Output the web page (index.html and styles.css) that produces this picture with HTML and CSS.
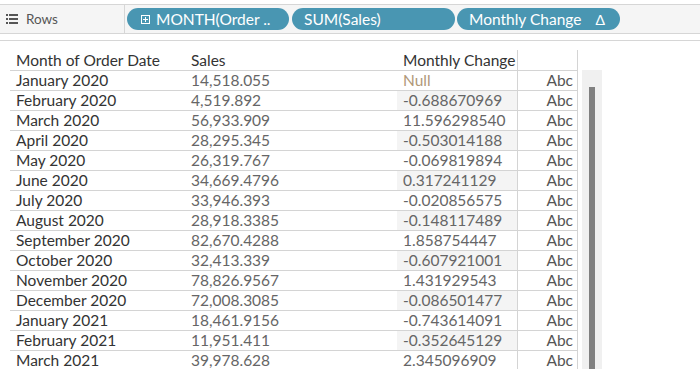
FILE: index.html
```html
<!DOCTYPE html>
<html lang="en">
<head>
    <meta charset="UTF-8">
    <meta name="viewport" content="width=device-width, initial-scale=1.0">
    <title>Monthly Change - Rows</title>
    <link rel="stylesheet" href="styles.css">
</head>
<body>
    <div class="shelf">
        <div class="shelf-label">
            <svg class="rows-icon" width="12" height="10" viewBox="0 0 12 10">
                <rect x="0" y="0" width="2" height="2" fill="#555"/>
                <rect x="3" y="0" width="9" height="2" fill="#555"/>
                <rect x="0" y="4" width="2" height="2" fill="#555"/>
                <rect x="3" y="4" width="9" height="2" fill="#555"/>
                <rect x="0" y="8" width="2" height="2" fill="#555"/>
                <rect x="3" y="8" width="9" height="2" fill="#555"/>
            </svg>
            <span>Rows</span>
        </div>
        <div class="pills">
            <div class="pill pill-date"><span class="plus-box"></span>MONTH(Order ..</div>
            <div class="pill pill-sum">SUM(Sales)</div>
            <div class="pill pill-calc">Monthly Change <span class="delta">&Delta;</span></div>
        </div>
    </div>

    <div class="divider"></div>

    <div class="view">
        <div class="table">
            <div class="row head">
                <div class="cell c1">Month of Order Date</div>
                <div class="cell c2">Sales</div>
                <div class="cell c3">Monthly Change</div>
                <div class="cell c4"></div>
            </div>
            <div class="row">
                <div class="cell c1">January 2020</div>
                <div class="cell c2">14,518.055</div>
                <div class="cell c3 null">Null</div>
                <div class="cell c4">Abc</div>
            </div>
            <div class="row alt">
                <div class="cell c1">February 2020</div>
                <div class="cell c2">4,519.892</div>
                <div class="cell c3">-0.688670969</div>
                <div class="cell c4">Abc</div>
            </div>
            <div class="row">
                <div class="cell c1">March 2020</div>
                <div class="cell c2">56,933.909</div>
                <div class="cell c3">11.596298540</div>
                <div class="cell c4">Abc</div>
            </div>
            <div class="row alt">
                <div class="cell c1">April 2020</div>
                <div class="cell c2">28,295.345</div>
                <div class="cell c3">-0.503014188</div>
                <div class="cell c4">Abc</div>
            </div>
            <div class="row">
                <div class="cell c1">May 2020</div>
                <div class="cell c2">26,319.767</div>
                <div class="cell c3">-0.069819894</div>
                <div class="cell c4">Abc</div>
            </div>
            <div class="row alt">
                <div class="cell c1">June 2020</div>
                <div class="cell c2">34,669.4796</div>
                <div class="cell c3">0.317241129</div>
                <div class="cell c4">Abc</div>
            </div>
            <div class="row">
                <div class="cell c1">July 2020</div>
                <div class="cell c2">33,946.393</div>
                <div class="cell c3">-0.020856575</div>
                <div class="cell c4">Abc</div>
            </div>
            <div class="row alt">
                <div class="cell c1">August 2020</div>
                <div class="cell c2">28,918.3385</div>
                <div class="cell c3">-0.148117489</div>
                <div class="cell c4">Abc</div>
            </div>
            <div class="row">
                <div class="cell c1">September 2020</div>
                <div class="cell c2">82,670.4288</div>
                <div class="cell c3">1.858754447</div>
                <div class="cell c4">Abc</div>
            </div>
            <div class="row alt">
                <div class="cell c1">October 2020</div>
                <div class="cell c2">32,413.339</div>
                <div class="cell c3">-0.607921001</div>
                <div class="cell c4">Abc</div>
            </div>
            <div class="row">
                <div class="cell c1">November 2020</div>
                <div class="cell c2">78,826.9567</div>
                <div class="cell c3">1.431929543</div>
                <div class="cell c4">Abc</div>
            </div>
            <div class="row alt">
                <div class="cell c1">December 2020</div>
                <div class="cell c2">72,008.3085</div>
                <div class="cell c3">-0.086501477</div>
                <div class="cell c4">Abc</div>
            </div>
            <div class="row">
                <div class="cell c1">January 2021</div>
                <div class="cell c2">18,461.9156</div>
                <div class="cell c3">-0.743614091</div>
                <div class="cell c4">Abc</div>
            </div>
            <div class="row alt">
                <div class="cell c1">February 2021</div>
                <div class="cell c2">11,951.411</div>
                <div class="cell c3">-0.352645129</div>
                <div class="cell c4">Abc</div>
            </div>
            <div class="row">
                <div class="cell c1">March 2021</div>
                <div class="cell c2">39,978.628</div>
                <div class="cell c3">2.345096909</div>
                <div class="cell c4">Abc</div>
            </div>
        </div>

        <div class="scrollbar">
            <div class="thumb"></div>
        </div>
    </div>
</body>
</html>
```

FILE: styles.css
```css
* {
    margin: 0;
    padding: 0;
    box-sizing: border-box;
}

html, body {
    height: 369px;
    overflow: hidden;
}

body {
    font-family: Lato, "Open Sans", sans-serif;
    background: #fff;
    padding-top: 4px;
}

/* rows shelf */
.shelf {
    display: flex;
    height: 30px;
    background: #f5f5f5;
    border-top: 1px solid #d6d6d6;
    border-bottom: 1px solid #d6d6d6;
}

.shelf-label {
    width: 125px;
    display: flex;
    align-items: center;
    padding-left: 6px;
    border-right: 1px solid #d6d6d6;
    color: #555;
    font-size: 13.5px;
}

.rows-icon {
    margin-right: 8px;
}

.pills {
    display: flex;
    align-items: center;
    padding-left: 2px;
    gap: 2px;
}

.pill {
    height: 22px;
    width: 163px;
    border-radius: 11px;
    background: #4996b2;
    color: #fff;
    font-size: 15.5px;
    display: flex;
    align-items: center;
    white-space: nowrap;
}

.pill-date {
    width: 162px;
    padding-left: 14px;
}

.pill-sum {
    margin-left: 1px;
    padding-left: 12px;
}

.pill-calc {
    padding-left: 12px;
}

.plus-box {
    width: 9px;
    height: 9px;
    border: 1px solid #fff;
    margin-right: 6px;
    position: relative;
}

.plus-box::before,
.plus-box::after {
    content: "";
    position: absolute;
    background: #fff;
}

.plus-box::before {
    left: 1px;
    top: 3px;
    width: 5px;
    height: 1px;
}

.plus-box::after {
    left: 3px;
    top: 1px;
    width: 1px;
    height: 5px;
}

.delta {
    margin-left: 14px;
    font-size: 14px;
}

.divider {
    margin-top: 6px;
    border-top: 1px solid #d6d6d6;
}

/* table */
.view {
    display: flex;
    align-items: flex-start;
}

.table {
    margin-left: 10px;
    width: 568px;
    font-size: 15.5px;
}

.row {
    display: flex;
    height: 20px;
    border-bottom: 1px solid #d4d4d4;
}

.row.head {
    height: 30px;
    align-items: flex-end;
}

.cell {
    line-height: 19px;
    height: 19px;
    white-space: nowrap;
}

.c1 {
    width: 175px;
    padding-left: 6px;
    color: #333;
}

.c2 {
    width: 212px;
    padding-left: 6px;
    color: #666;
}

.c3 {
    width: 120px;
    padding-left: 6px;
    color: #666;
}

.c4 {
    width: 61px;
    padding-right: 4px;
    text-align: right;
    color: #555;
    border-left: 1px solid #d4d4d4;
    border-right: 1px solid #d4d4d4;
}

.head .cell {
    color: #333;
}

.head .c4 {
    height: 20px;
}

.row.alt .c3 {
    background: #f4f4f4;
}

.null {
    color: #b09878;
}

/* scrollbar */
.scrollbar {
    margin-left: 4px;
    margin-top: 29px;
    width: 20px;
    height: 300px;
    background: #f0f0f0;
    padding: 17px 7px 0;
}

.thumb {
    width: 6px;
    height: 100%;
    background: #808080;
}
```
